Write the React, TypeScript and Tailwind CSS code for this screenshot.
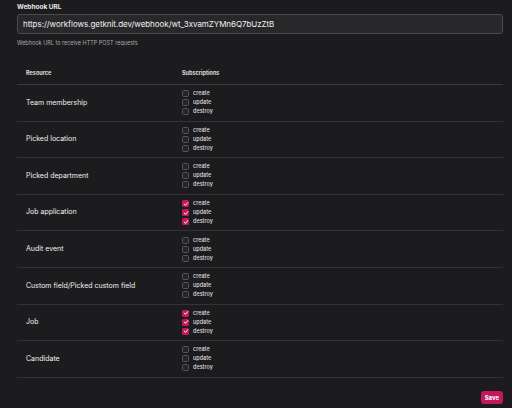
import React, { useState } from 'react'

type Action = 'create' | 'update' | 'destroy'

const ACTIONS: Action[] = ['create', 'update', 'destroy']

const initialResources = [
  { name: 'Team membership', checked: false },
  { name: 'Picked location', checked: false },
  { name: 'Picked department', checked: false },
  { name: 'Job application', checked: true },
  { name: 'Audit event', checked: false },
  { name: 'Custom field/Picked custom field', checked: false },
  { name: 'Job', checked: true },
  { name: 'Candidate', checked: false },
]

const Checkbox: React.FC<{ checked: boolean; onChange: () => void }> = ({ checked, onChange }) => (
  <button
    onClick={onChange}
    className={`w-[7px] h-[7px] rounded-[1.5px] flex items-center justify-center ${
      checked ? 'bg-[#c2185b] border-0' : 'bg-[#252527] border border-[#55555a]'
    }`}
  >
    {checked && (
      <svg viewBox="0 0 10 10" className="w-[6px] h-[6px]">
        <path d="M2 5.2 L4.2 7.2 L8 2.8" fill="none" stroke="white" strokeWidth="1.6" strokeLinecap="round" strokeLinejoin="round" />
      </svg>
    )}
  </button>
)

export default function App() {
  const [subs, setSubs] = useState(
    initialResources.map((r) => ({ name: r.name, create: r.checked, update: r.checked, destroy: r.checked }))
  )

  const toggle = (i: number, a: Action) => {
    setSubs((prev) => prev.map((s, idx) => (idx === i ? { ...s, [a]: !s[a] } : s)))
  }

  return (
    <div
      className="w-[512px] h-[408px] bg-[#1c1c1e] text-[#e6e6e6] px-[17px] pt-[3px] overflow-hidden"
      style={{ fontFamily: 'Inter, "Noto Sans", sans-serif' }}
    >
      <div className="text-[6.5px] font-bold text-[#e8e8e8] leading-[8px]">Webhook URL</div>
      <div className="mt-[3px] h-[20px] w-[486px] rounded-[3px] border border-[#4a4a4e] bg-[#28282a] flex items-center px-[5px]">
        <span className="text-[8px] text-[#f0f0f0] tracking-[-0.05px]">
          https://workflows.getknit.dev/webhook/wt_3xvamZYMn6Q7bUzZtB
        </span>
      </div>
      <div className="mt-[5px] text-[5.5px] text-[#a8a8a8] leading-[8px]">Webhook URL to receive HTTP POST requests</div>

      <div className="mt-[16px] w-[486px]">
        <div className="flex items-center h-[22px] border-b border-[#3a3a3d] text-[5.5px] font-bold text-[#dcdcdc]">
          <div className="w-[165px] pl-[9px]">Resource</div>
          <div>Subscriptions</div>
        </div>
        {subs.map((s, i) => (
          <div key={s.name} className="flex items-center h-[36.6px] border-b border-[#333336]">
            <div className="w-[165px] pl-[9px] text-[7px] text-[#f0f0f0]">{s.name}</div>
            <div className="flex flex-col gap-[2px]">
              {ACTIONS.map((a) => (
                <div key={a} className="flex items-center gap-[4px] h-[7px]">
                  <Checkbox checked={s[a]} onChange={() => toggle(i, a)} />
                  <span className="text-[5.5px] font-medium text-[#dcdcdc] leading-[7px]">{a}</span>
                </div>
              ))}
            </div>
          </div>
        ))}
      </div>

      <div className="flex justify-end w-[486px] mt-[13px]">
        <button className="h-[13px] px-[4px] rounded-[3px] bg-[#c2185b] text-white text-[6px] font-bold">Save</button>
      </div>
    </div>
  )
}
